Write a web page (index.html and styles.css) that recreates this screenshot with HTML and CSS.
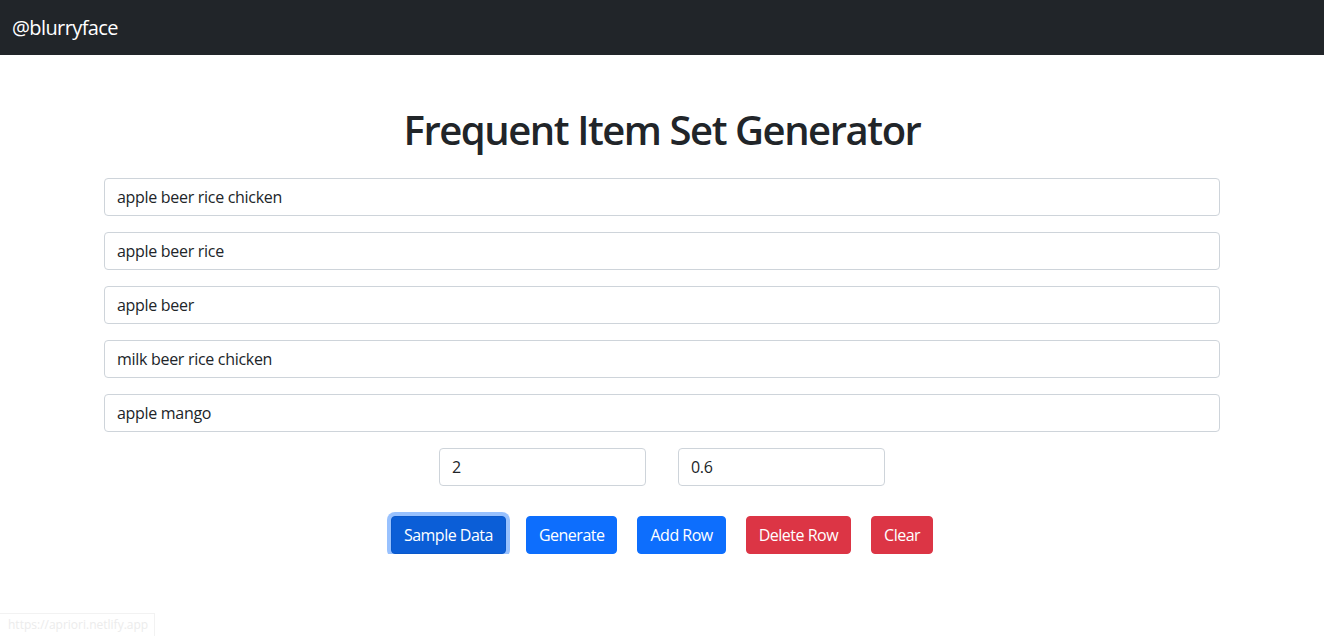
FILE: index.html
```html
<!DOCTYPE html>
<html lang="en">
<head>
<meta charset="utf-8">
<title>Frequent Item Set Generator</title>
<link rel="stylesheet" href="styles.css">
</head>
<body>
<nav class="navbar">
  <span class="brand">@blurryface</span>
</nav>
<main class="container">
  <h1 class="title">Frequent Item Set Generator</h1>
  <div class="rows">
    <input class="field" type="text" value="apple beer rice chicken">
    <input class="field" type="text" value="apple beer rice">
    <input class="field" type="text" value="apple beer">
    <input class="field" type="text" value="milk beer rice chicken">
    <input class="field" type="text" value="apple mango">
  </div>
  <div class="params">
    <input class="field small" type="text" value="2">
    <input class="field small" type="text" value="0.6">
  </div>
  <div class="actions">
    <button class="btn primary focused">Sample Data</button>
    <button class="btn primary">Generate</button>
    <button class="btn primary">Add Row</button>
    <button class="btn danger">Delete Row</button>
    <button class="btn danger">Clear</button>
  </div>
</main>
<div class="status">https://apriori.netlify.app</div>
</body>
</html>
```
FILE: styles.css
```css
* { box-sizing: border-box; }
html, body { margin: 0; padding: 0; }
body {
  font-family: "Open Sans", "Noto Sans", sans-serif;
  font-size: 16px;
  color: #212529;
  background: #fff;
}
.navbar {
  height: 55px;
  background: #212529;
  display: flex;
  align-items: center;
  padding: 0 12px;
}
.brand {
  color: #fff;
  font-size: 20px;
  line-height: 1.5;
  letter-spacing: -0.6px;
}
.container {
  max-width: 1140px;
  margin: 0 auto;
  padding: 0 12px;
}
.title {
  font-size: 40px;
  font-weight: 600;
  line-height: 1.2;
  letter-spacing: -1.45px;
  text-align: center;
  margin: 51px 0 24px;
}
.rows {
  display: flex;
  flex-direction: column;
  gap: 16px;
}
.field {
  display: block;
  width: 100%;
  height: 38px;
  padding: 6px 12px;
  font: inherit;
  font-size: 16px;
  letter-spacing: -0.3px;
  color: #212529;
  background: #fff;
  border: 1px solid #ced4da;
  border-radius: 4px;
  outline: none;
}
.params {
  display: flex;
  justify-content: center;
  gap: 32px;
  margin-top: 16px;
}
.field.small { width: 207px; }
.actions {
  display: flex;
  justify-content: center;
  gap: 20px;
  margin-top: 30px;
}
.btn {
  height: 38px;
  padding: 6px 12px;
  font: inherit;
  font-size: 16px;
  line-height: 1.5;
  letter-spacing: -0.5px;
  color: #fff;
  border: 1px solid transparent;
  border-radius: 4px;
  cursor: pointer;
}
.primary { background: #0d6efd; border-color: #0d6efd; }
.danger { background: #dc3545; border-color: #dc3545; }
.primary.focused {
  background: #0b5ed7;
  border-color: #0a58ca;
  box-shadow: 0 0 0 4px rgba(49, 132, 253, 0.5);
}
.status {
  position: fixed;
  left: 0;
  bottom: 0;
  padding: 2px 6px 3px 8px;
  font-size: 12px;
  color: #ececec;
  background: #fff;
  border: 1px solid #f2f2f2;
  border-left: none;
  border-bottom: none;
}
```
